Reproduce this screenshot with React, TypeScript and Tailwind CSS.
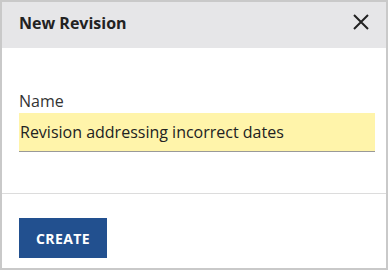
import React from 'react';

const font = { fontFamily: '"Open Sans", "Noto Sans", sans-serif' };

function CloseIcon() {
  return (
    <svg width="16" height="16" viewBox="0 0 16 16" className="mb-[3px]">
      <path d="M1 1 L15 15 M15 1 L1 15" stroke="#222" strokeWidth="2" fill="none" />
    </svg>
  );
}

export default function App() {
  return (
    <div
      className="flex flex-col w-[388px] h-[270px] border-2 border-[#c9c9c9] bg-white text-[#222]"
      style={font}
    >
      {/* header */}
      <div className="flex items-center justify-between h-[46px] shrink-0 bg-[#e6e6e8] pl-[17px] pr-[17px] pb-[4px]">
        <h1 className="text-[16px] leading-[24px] font-bold text-[#222]">New Revision</h1>
        <CloseIcon />
      </div>

      {/* body */}
      <div className="flex flex-col pl-[17px] pt-[41px] pb-[41px] border-b border-[#dcdcdc]">
        <label className="text-[16px] leading-[24px] text-[#333]">Name</label>
        <input
          defaultValue="Revision addressing incorrect dates"
          className="w-[356px] h-[39px] bg-[#fff4aa] border-b border-[#999] px-[1px] text-[16px] leading-[24px] text-[#222] outline-none"
          style={font}
        />
      </div>

      {/* footer */}
      <div className="flex pl-[17px] pt-[24px]">
        <button className="w-[88px] h-[40px] bg-[#22508f] text-white text-[14px] font-bold tracking-[0.4px]">
          CREATE
        </button>
      </div>
    </div>
  );
}
